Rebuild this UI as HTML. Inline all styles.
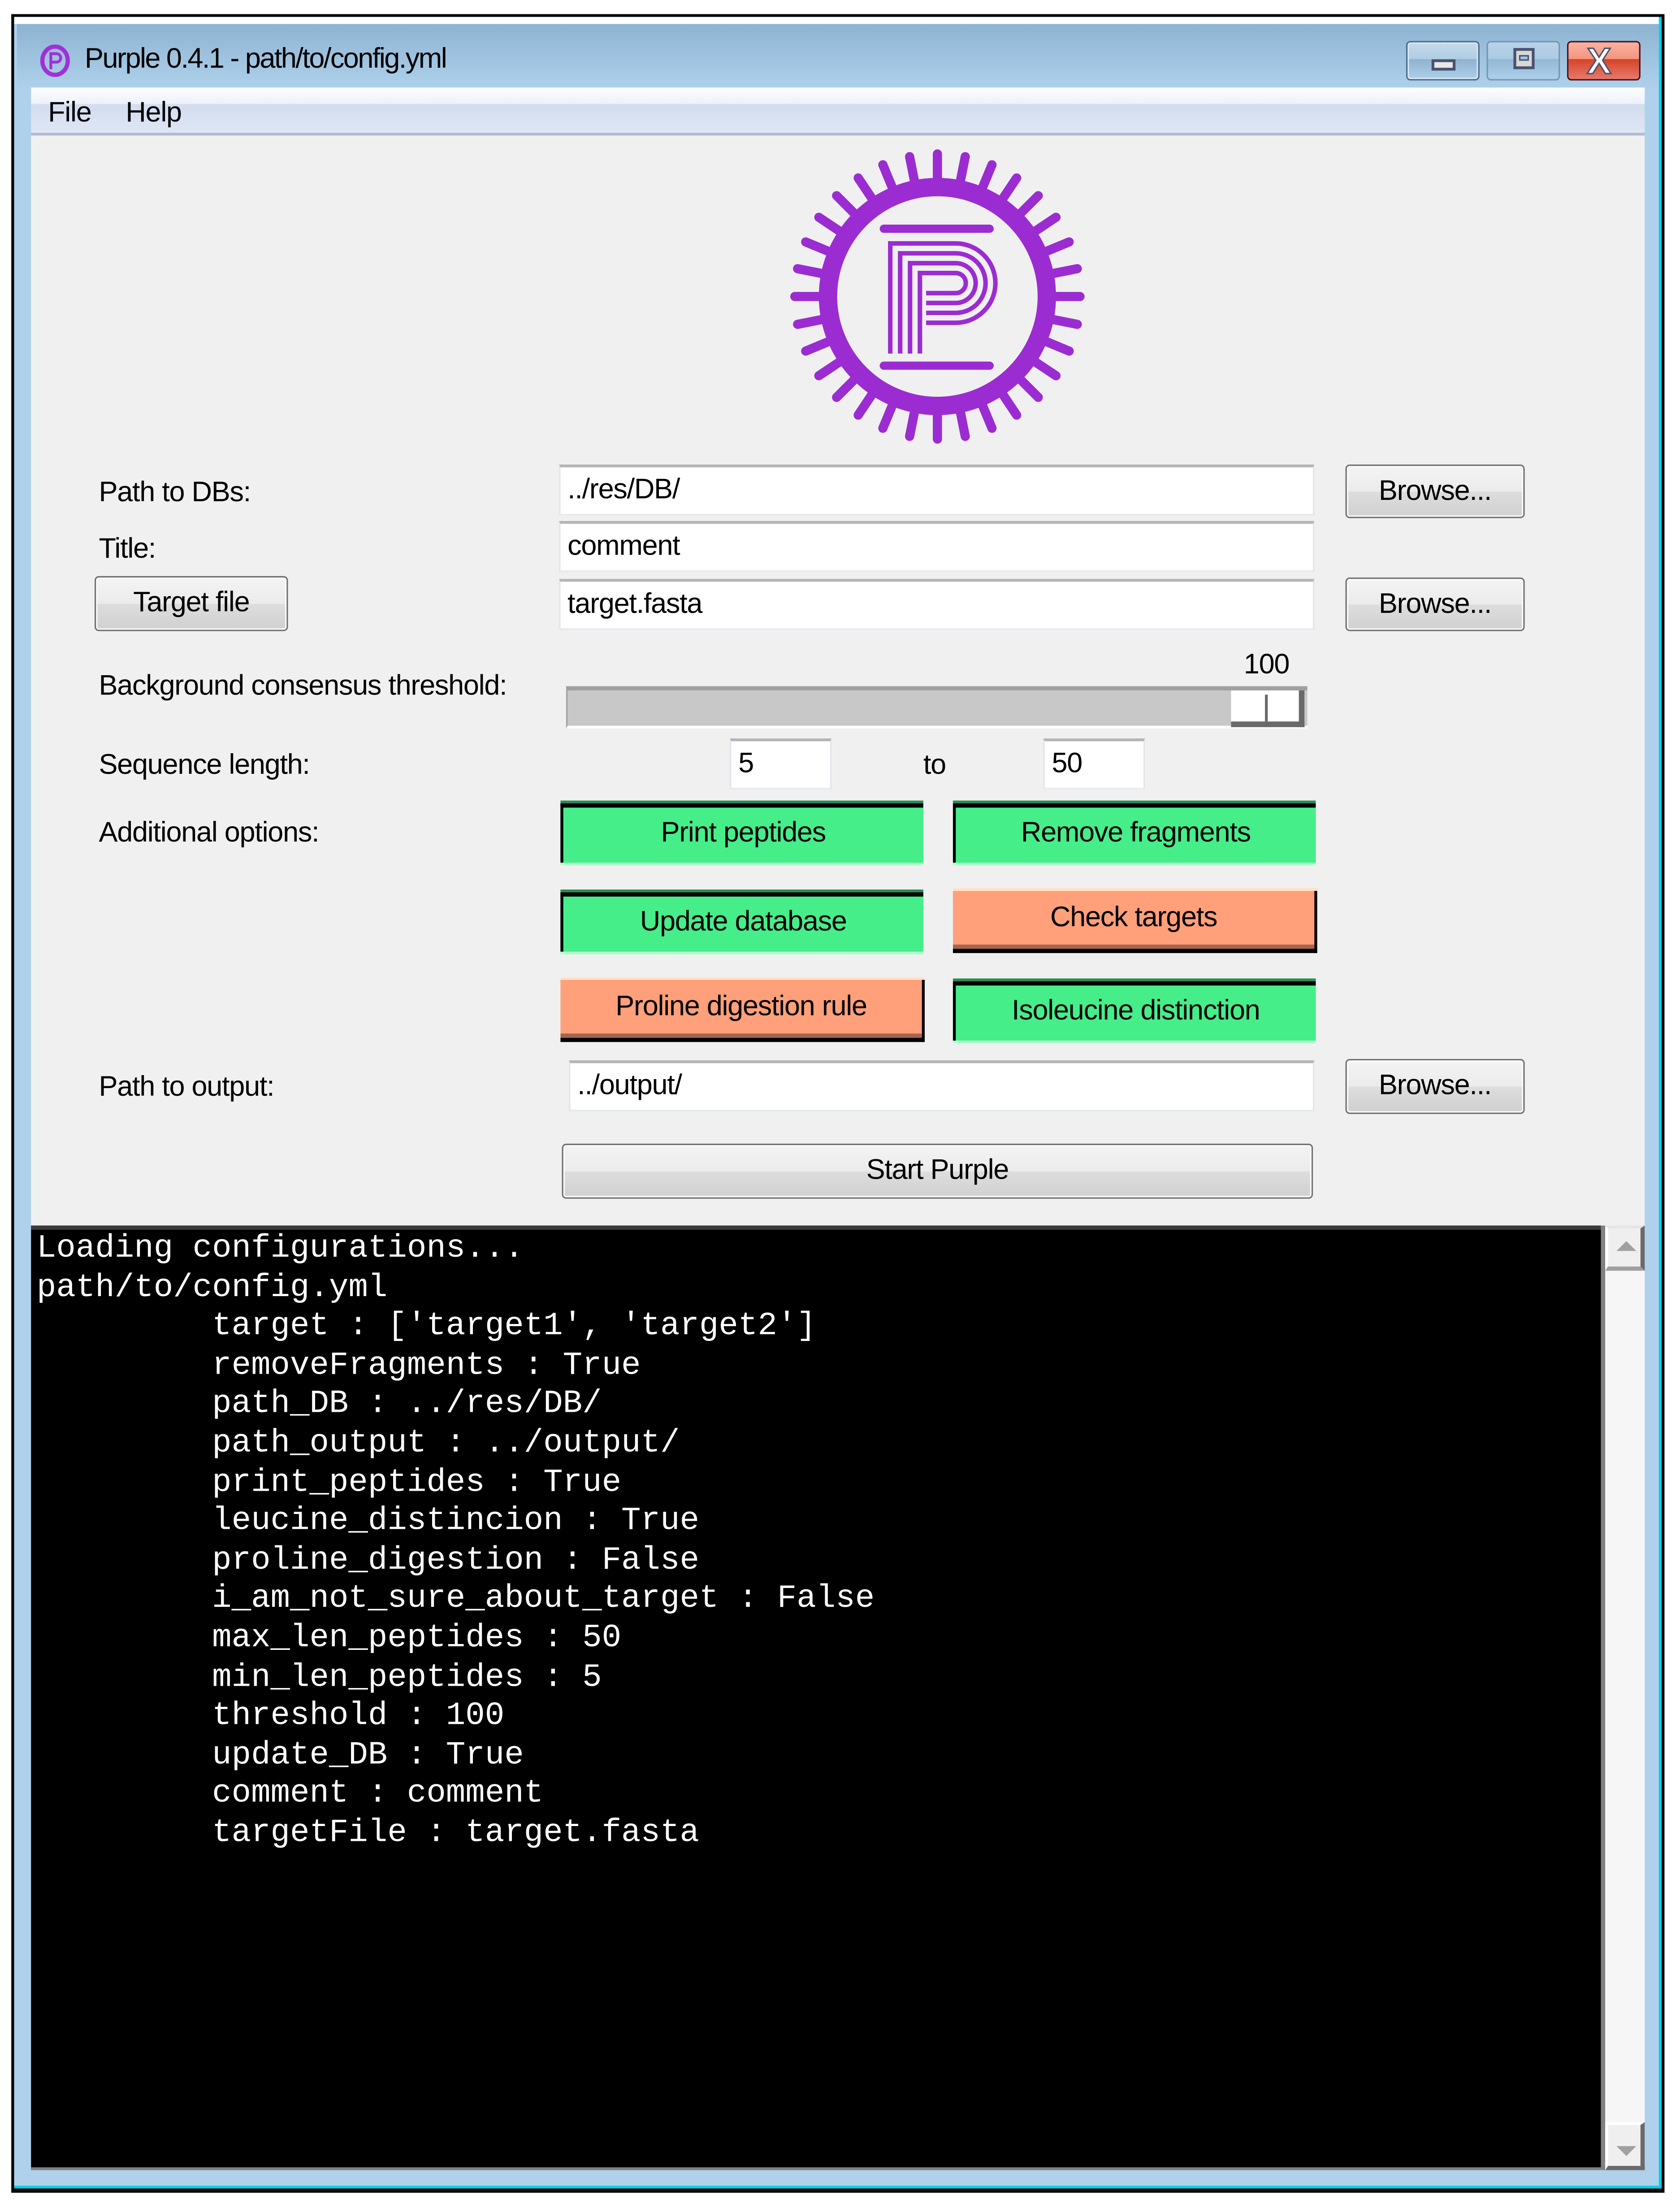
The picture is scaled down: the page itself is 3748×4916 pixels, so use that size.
<!DOCTYPE html>
<html><head><meta charset="utf-8"><style>
*{margin:0;padding:0;box-sizing:border-box}
html,body{width:3748px;height:4916px;background:#fff;overflow:hidden}
#w{position:absolute;left:0;top:0;width:1190px;height:1561px;transform:scale(3.1496,3.1493);transform-origin:0 0;font-family:"Liberation Sans",sans-serif;font-size:20px;letter-spacing:-0.4px;color:#000}
.a{position:absolute}
.lbl{position:absolute;left:70px;line-height:24px}
.inp{position:absolute;background:#fff;border-top:2px solid #b4b4b4;border-left:1px solid #e2e3ea;border-right:1px solid #e2e3ea;border-bottom:1px solid #e3e9ef;padding-left:5px;line-height:32px}
.btn{position:absolute;border:1px solid #707070;border-radius:3px;background:linear-gradient(#f4f4f4 0%,#ebebeb 50%,#dddddd 51%,#d0d0d0 100%);text-align:center;box-shadow:inset 0 0 0 1px #fcfcfc}
.g{position:absolute;background:#46ee8a;border-top:3px solid #000;border-left:2px solid #000;box-shadow:0 -2px 0 #2a8a52, 0 2px 0 #b5ffcf;text-align:center;line-height:36px}
.o{position:absolute;background:#ffa07a;border-bottom:3px solid #000;border-right:2px solid #000;box-shadow:0 -2px 0 #ffe3c6, inset 0 -3px 0 #a8654b;text-align:center;line-height:38px}
.con{font-family:"Liberation Mono",monospace;font-size:23px;letter-spacing:0;color:#fff;line-height:27.6px;white-space:pre}
</style></head><body><div id="w">
<div class="a" style="left:8px;top:10px;width:1171px;height:1543px;background:#000"></div>
<div class="a" style="left:10px;top:12px;width:1167px;height:1538px;background:#00d0e8"></div>
<div class="a" style="left:10px;top:12px;width:1165px;height:1536px;background:#afd1eb"></div>
<div class="a" style="left:10px;top:12px;width:1165px;height:5px;background:#fff"></div>
<div class="a" style="left:12px;top:17px;width:1163px;height:48px;background:linear-gradient(#8db3d2,#b0d2ec)"></div>
<svg class="a" style="left:28px;top:31px" width="22" height="24" viewBox="0 0 22 24"><ellipse cx="11" cy="12" rx="9" ry="10" fill="none" stroke="#a030d8" stroke-width="3"/><path d="M8 18V7h4a3 3 0 0 1 0 6H9" fill="none" stroke="#a030d8" stroke-width="2"/></svg>
<div class="a" style="left:60px;top:30px;font-size:20px;line-height:24px;letter-spacing:-0.8px">Purple 0.4.1 - path/to/config.yml</div>
<div class="a" style="left:996px;top:29px;width:52px;height:28px;border:1px solid #4f6a8c;border-radius:3px;background:linear-gradient(#c6daec 0%,#b0cde4 45%,#90b2cf 46%,#acd0ea 100%);box-shadow:inset 0 0 0 1px #dbe8f4"></div>
<div class="a" style="left:1014px;top:42px;width:17px;height:8px;border:2px solid #4a5270;background:#e8e8e8"></div>
<div class="a" style="left:1053px;top:29px;width:52px;height:28px;border:1px solid #7694b2;border-radius:3px;background:linear-gradient(#b8d2e8 0%,#abcbe4 45%,#94b7d4 46%,#acd0ea 100%)"></div>
<div class="a" style="left:1072px;top:34px;width:15px;height:15px;border:2px solid #4a5270;background:#d8d8d8"><div style="margin:3px auto;width:7px;height:4px;border:1.5px solid #4a5270;background:#9fc6e2"></div></div>
<div class="a" style="left:1110px;top:29px;width:52px;height:28px;border:1px solid #4a1018;border-radius:3px;background:linear-gradient(#fbb1a0 0%,#f39680 45%,#d54427 46%,#e8786a 100%)"></div>
<div class="a" style="left:1124px;top:28px;font:bold 26px 'Liberation Sans',sans-serif;color:#fff;-webkit-text-stroke:1px #4a5270;letter-spacing:0">X</div>
<div class="a" style="left:22px;top:62px;width:1143px;height:34px;background:linear-gradient(#fcfdfe 0%,#eef2f9 35%,#d3ddef 38%,#dfe6f6 100%);border-bottom:2px solid #b5bbd0"></div>
<div class="a" style="left:34px;top:68px;line-height:24px">File</div>
<div class="a" style="left:89px;top:68px;line-height:24px">Help</div>
<div class="a" style="left:22px;top:96px;width:1143px;height:774px;background:#f0f0f0"></div>
<svg class="a" style="left:0;top:0" width="1190" height="400" viewBox="0 0 1190 400">
<g transform="translate(664,210)" stroke="#9b2cd2" stroke-linecap="round" stroke-width="6.5" fill="none">
<g id="sp"><line x1="0" y1="-80" x2="0" y2="-101"/></g>
<use href="#sp" transform="rotate(11.25)"/><use href="#sp" transform="rotate(22.5)"/><use href="#sp" transform="rotate(33.75)"/><use href="#sp" transform="rotate(45)"/><use href="#sp" transform="rotate(56.25)"/><use href="#sp" transform="rotate(67.5)"/><use href="#sp" transform="rotate(78.75)"/><use href="#sp" transform="rotate(90)"/><use href="#sp" transform="rotate(101.25)"/><use href="#sp" transform="rotate(112.5)"/><use href="#sp" transform="rotate(123.75)"/><use href="#sp" transform="rotate(135)"/><use href="#sp" transform="rotate(146.25)"/><use href="#sp" transform="rotate(157.5)"/><use href="#sp" transform="rotate(168.75)"/><use href="#sp" transform="rotate(180)"/><use href="#sp" transform="rotate(191.25)"/><use href="#sp" transform="rotate(202.5)"/><use href="#sp" transform="rotate(213.75)"/><use href="#sp" transform="rotate(225)"/><use href="#sp" transform="rotate(236.25)"/><use href="#sp" transform="rotate(247.5)"/><use href="#sp" transform="rotate(258.75)"/><use href="#sp" transform="rotate(270)"/><use href="#sp" transform="rotate(281.25)"/><use href="#sp" transform="rotate(292.5)"/><use href="#sp" transform="rotate(303.75)"/><use href="#sp" transform="rotate(315)"/><use href="#sp" transform="rotate(326.25)"/><use href="#sp" transform="rotate(337.5)"/><use href="#sp" transform="rotate(348.75)"/>
<circle r="77.5" stroke-width="13"/>
</g>
<g stroke="#9b2cd2" fill="none">
<line x1="626" y1="162" x2="701" y2="162" stroke-width="5.8" stroke-linecap="round"/>
<line x1="626" y1="259" x2="701" y2="259" stroke-width="5.8" stroke-linecap="round"/>
<g stroke-width="3.2">
<path d="M630.6 250.4V172.4H677A28.1 28.1 0 0 1 677 228.6H656"/>
<path d="M637.6 250.4V179.4H677A21.1 21.1 0 0 1 677 221.6H656"/>
<path d="M644.6 250.4V186.4H677A14.1 14.1 0 0 1 677 214.6H656"/>
<path d="M651.6 250.4V193.4H677A7.1 7.1 0 0 1 677 207.6H656"/>
</g></g>
</svg>
<div class="lbl" style="top:337px">Path to DBs:</div>
<div class="inp" style="left:396px;top:329px;width:535px;height:36px">../res/DB/</div>
<div class="btn" style="left:953px;top:329px;width:127px;height:38px;line-height:36px">Browse...</div>
<div class="lbl" style="top:377px">Title:</div>
<div class="inp" style="left:396px;top:369px;width:535px;height:36px">comment</div>
<div class="btn" style="left:67px;top:408px;width:137px;height:39px;line-height:37px">Target file</div>
<div class="inp" style="left:396px;top:410px;width:535px;height:36px">target.fasta</div>
<div class="btn" style="left:953px;top:409px;width:127px;height:38px;line-height:36px">Browse...</div>
<div class="lbl" style="top:474px">Background consensus threshold:</div>
<div class="a" style="left:881px;top:460px;line-height:22px">100</div>
<div class="a" style="left:401px;top:486px;width:525px;height:30px;background:#c8c8c8;border-top:3px solid #a0a0a0;border-left:1px solid #a0a0a0;border-bottom:2px solid #fff"></div>
<div class="a" style="left:872px;top:489px;width:52px;height:26px;background:#fff;border-right:4px solid #6a6a6a;border-bottom:4px solid #6a6a6a"></div>
<div class="a" style="left:896px;top:492px;width:2px;height:19px;background:#6a6a6a"></div>
<div class="lbl" style="top:530px">Sequence length:</div>
<div class="inp" style="left:517px;top:523px;width:72px;height:36px">5</div>
<div class="a" style="left:654px;top:530px;line-height:24px">to</div>
<div class="inp" style="left:739px;top:523px;width:72px;height:36px">50</div>
<div class="lbl" style="top:578px">Additional options:</div>
<div class="g" style="left:397px;top:569px;width:257px;height:42px">Print peptides</div>
<div class="g" style="left:675px;top:569px;width:257px;height:42px">Remove fragments</div>
<div class="g" style="left:397px;top:632px;width:257px;height:42px">Update database</div>
<div class="o" style="left:675px;top:631px;width:258px;height:44px">Check targets</div>
<div class="o" style="left:397px;top:694px;width:258px;height:44px">Proline digestion rule</div>
<div class="g" style="left:675px;top:695px;width:257px;height:42px">Isoleucine distinction</div>
<div class="lbl" style="top:758px">Path to output:</div>
<div class="inp" style="left:403px;top:751px;width:528px;height:36px">../output/</div>
<div class="btn" style="left:953px;top:750px;width:127px;height:39px;line-height:37px">Browse...</div>
<div class="btn" style="left:398px;top:810px;width:532px;height:39px;line-height:37px">Start Purple</div>
<div class="a" style="left:22px;top:868px;width:1112px;height:669px;background:#000;border-top:3px solid #3a3a3a;border-bottom:2px solid #808080"></div>
<div class="a con" style="left:26px;top:871px">Loading configurations...
path/to/config.yml
         target : ['target1', 'target2']
         removeFragments : True
         path_DB : ../res/DB/
         path_output : ../output/
         print_peptides : True
         leucine_distincion : True
         proline_digestion : False
         i_am_not_sure_about_target : False
         max_len_peptides : 50
         min_len_peptides : 5
         threshold : 100
         update_DB : True
         comment : comment
         targetFile : target.fasta</div>
<div class="a" style="left:1134px;top:868px;width:31px;height:669px;background:#f6f6f6;border-left:3px solid #808080"></div>
<div class="a" style="left:1137px;top:868px;width:28px;height:32px;background:#efefef;border-top:2px solid #e4e4e4;border-left:2px solid #fff;border-right:3px solid #6a6a6a;border-bottom:3px solid #a0a0a0"></div>
<div class="a" style="left:1145px;top:879px;width:0;height:0;border-left:7px solid transparent;border-right:7px solid transparent;border-bottom:7px solid #a0a0a0"></div>
<div class="a" style="left:1137px;top:1503px;width:28px;height:34px;background:#efefef;border-top:2px solid #fff;border-left:2px solid #fff;border-right:3px solid #6a6a6a;border-bottom:3px solid #6a6a6a"></div>
<div class="a" style="left:1145px;top:1520px;width:0;height:0;border-left:7px solid transparent;border-right:7px solid transparent;border-top:7px solid #a0a0a0"></div>
</div></body></html>
